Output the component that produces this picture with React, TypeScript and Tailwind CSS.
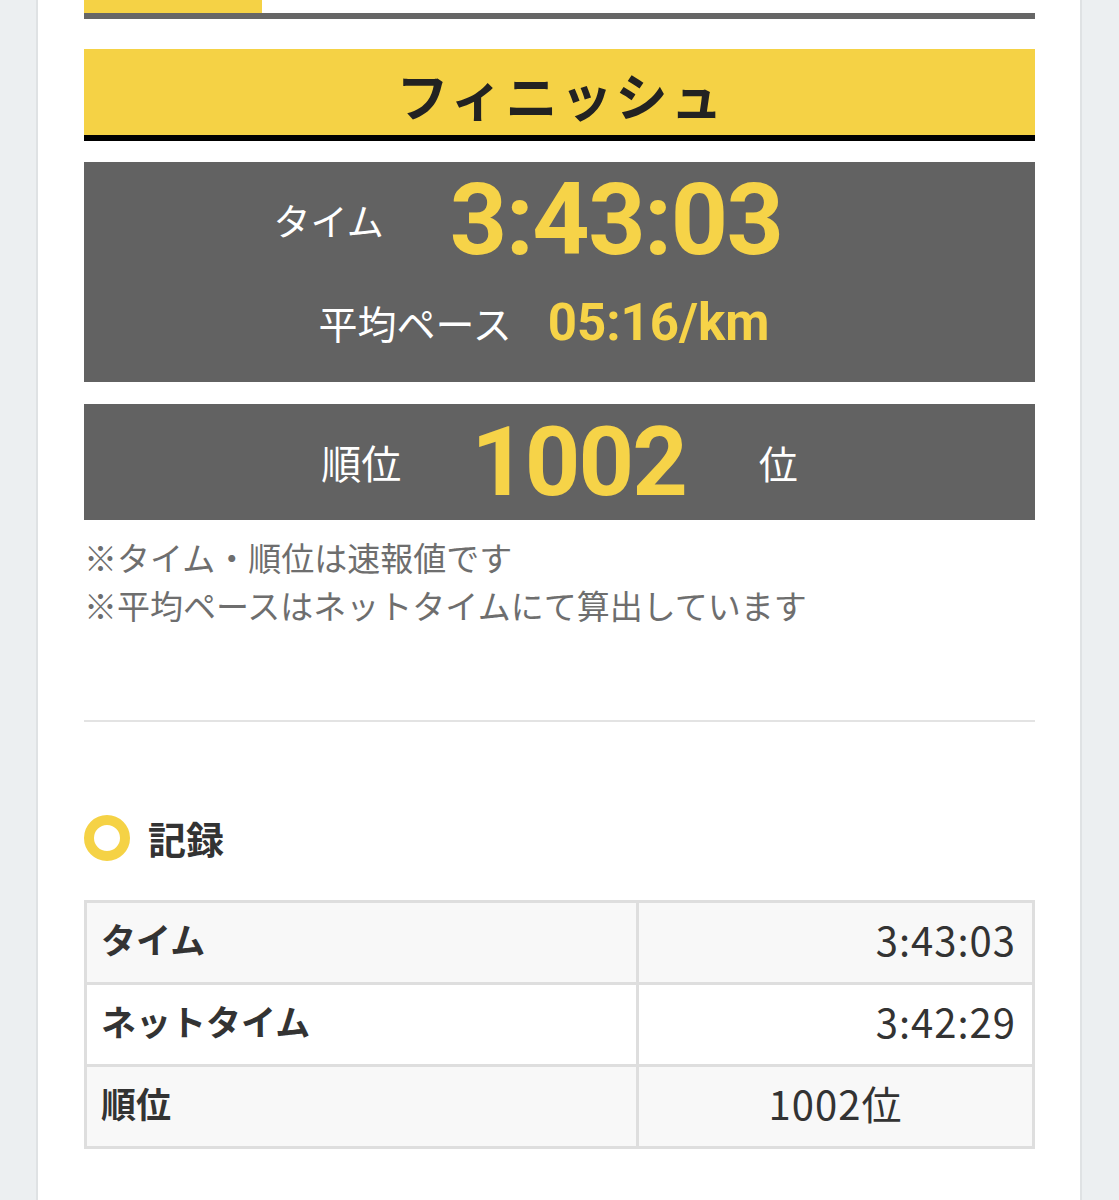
import React from 'react';

const jp = { fontFamily: '"Noto Sans CJK JP", "Noto Sans", sans-serif' };
const num = { fontFamily: 'Roboto, "Noto Sans", sans-serif' };

const records = [
  { label: 'タイム', value: '3:43:03', align: 'text-right pr-[16px]', bg: 'bg-[#f8f8f8]' },
  { label: 'ネットタイム', value: '3:42:29', align: 'text-right pr-[16px]', bg: 'bg-white' },
  { label: '順位', value: '1002位', align: 'text-center', bg: 'bg-[#f8f8f8]' },
];

const App: React.FC = () => {
  return (
    <div className="min-h-[1200px] bg-[#eceff1]" style={jp}>
      <div className="ml-[36px] w-[1046px] min-h-[1200px] bg-white border-x-2 border-[#dfe2e4] pl-[46px] pr-[45px]">
        {/* progress */}
        <div className="border-b-[6px] border-[#666666]">
          <div className="h-[13px] w-[178px] bg-[#f5d245]" />
        </div>

        {/* finish header */}
        <div className="mt-[30px] h-[92px] bg-[#f5d245] border-b-[6px] border-black flex items-center justify-center pt-[6px]">
          <h1 className="text-[52px] font-bold leading-none tracking-[3px] pl-[3px] text-[#222222]">フィニッシュ</h1>
        </div>

        {/* time box */}
        <div className="mt-[21px] h-[220px] bg-[#626262] flex flex-col pt-[8px]">
          <div className="flex items-center justify-center pr-[63px] h-[100px]">
            <span className="text-[37px] text-white leading-none">タイム</span>
            <span className="ml-[66px] text-[100px] font-bold leading-none tracking-[-1.5px] text-[#f6d348]" style={num}>3:43:03</span>
          </div>
          <div className="mt-[26px] flex items-center justify-center pr-[31px] h-[52px]">
            <span className="text-[39px] text-white leading-none">平均ペース</span>
            <span className="ml-[36px] text-[51px] font-bold leading-none text-[#f6d348]" style={num}>05:16/km</span>
          </div>
        </div>

        {/* rank box */}
        <div className="mt-[22px] h-[116px] bg-[#626262] flex items-center justify-center">
          <span className="text-[40px] text-white leading-none">順位</span>
          <span className="ml-[70px] text-[97px] font-bold leading-none tracking-[-2px] text-[#f6d348]" style={num}>1002</span>
          <span className="ml-[73px] text-[39px] text-white leading-none">位</span>
        </div>

        {/* notes */}
        <div className="mt-[13px] text-[33px] leading-[48px] text-[#6e6e6e]">
          <p>※タイム・順位は速報値です</p>
          <p>※平均ペースはネットタイムにて算出しています</p>
        </div>

        <div className="mt-[91px] h-[2px] bg-[#e3e3e3]" />

        {/* record heading */}
        <div className="mt-[93px] flex items-center h-[46px]">
          <span className="w-[46px] h-[46px] rounded-full border-[10px] border-[#f5d245]" />
          <h2 className="ml-[18px] text-[38px] font-bold leading-none text-[#333333]">記録</h2>
        </div>

        {/* record table */}
        <table className="mt-[39px] w-full border-collapse text-[#333333]">
          <tbody>
            {records.map((r) => (
              <tr key={r.label} className={r.bg}>
                <td className="w-[552px] h-[82px] border-[3px] border-[#dedede] pl-[14px] pb-[8px] text-[35px] font-bold leading-none">
                  {r.label}
                </td>
                <td className={`h-[82px] border-[3px] border-[#dedede] pb-[8px] text-[40px] tracking-[1px] leading-none ${r.align}`}>
                  {r.value}
                </td>
              </tr>
            ))}
          </tbody>
        </table>
      </div>
    </div>
  );
};

export default App;
